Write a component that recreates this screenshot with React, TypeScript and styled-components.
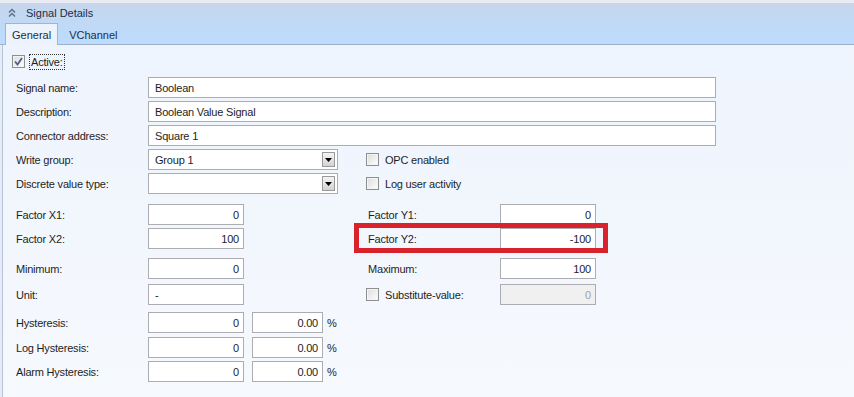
import React from 'react';
import styled, { createGlobalStyle, css } from 'styled-components';

const GlobalStyle = createGlobalStyle`
  html, body {
    margin: 0;
    padding: 0;
    background: #e8ecf2;
  }
  body {
    font-family: "Liberation Sans", Arial, sans-serif;
    font-size: 11px;
    letter-spacing: -0.2px;
    color: #1e1e1e;
  }
`;

const Panel = styled.div`
  width: 854px;
  height: 394px;
  margin-top: 3px;
  display: flex;
  flex-direction: column;
  overflow: hidden;
`;

const TopBar = styled.div`
  background: linear-gradient(to bottom, #c6d6eb 0%, #c0d9f6 50%, #bcdcfe 100%);
  border-bottom: 1px solid #9fb2ca;
  height: 41px;
  display: flex;
  flex-direction: column;
`;

const Header = styled.div`
  height: 19px;
  display: flex;
  align-items: center;
  padding-left: 8px;
  gap: 10px;
  color: #1d2d46;
  font-size: 11px;
  letter-spacing: 0;
`;

const TabStrip = styled.div`
  flex: 1;
  display: flex;
  align-items: flex-end;
  padding-left: 5px;
  gap: 2px;
`;

const Tab = styled.div<{ $active?: boolean }>`
  height: 20px;
  display: flex;
  align-items: center;
  padding: 0 6px 0 6px;
  color: #1d2d46;
  letter-spacing: 0;
  margin-bottom: -1px;
  ${p =>
    p.$active
      ? css`
          background: #ecf3fc;
          border: 1px solid #a3b5cd;
          border-bottom: none;
          height: 21px;
        `
      : css`
          padding-left: 9px;
        `}
`;

const Content = styled.div`
  flex: 1;
  margin-left: 2px;
  border-left: 1px solid #b3c4dc;
  background: linear-gradient(to bottom, #eef4fd 0%, #f3f7fd 60%, #f6f9fd 100%);
  padding: 10px 0 0 13px;
`;

const CheckRow = styled.div`
  display: flex;
  align-items: center;
  height: 13px;
  padding-left: -4px;
  margin-left: -4px;
`;

const Box = styled.span`
  width: 11px;
  height: 11px;
  border: 1px solid #8e8f8f;
  background: linear-gradient(135deg, #dcdcdc 0%, #f4f4f4 70%, #ffffff 100%);
  box-shadow: inset 0 0 0 1px #f4f4f4;
  display: inline-flex;
  align-items: center;
  justify-content: center;
  flex-shrink: 0;
`;

const FocusText = styled.span`
  margin-left: 5px;
  padding: 1px 1px;
  outline: 1px dotted #333;
`;

const Row = styled.div<{ $mt: number }>`
  display: flex;
  align-items: center;
  height: 21px;
  margin-top: ${p => p.$mt}px;
`;

const Label = styled.div`
  width: 132px;
  flex-shrink: 0;
`;

const Input = styled.div<{ $w: number; $right?: boolean; $disabled?: boolean }>`
  box-sizing: border-box;
  width: ${p => p.$w}px;
  height: 21px;
  border: 1px solid #abadb3;
  background: ${p => (p.$disabled ? '#f0f0f0' : '#ffffff')};
  color: ${p => (p.$disabled ? '#a3a3a3' : '#1e1e1e')};
  display: flex;
  align-items: center;
  justify-content: ${p => (p.$right ? 'flex-end' : 'flex-start')};
  padding: ${p => (p.$right ? '0 4px 0 0' : '0 0 0 6px')};
  flex-shrink: 0;
  position: relative;
`;

const DropButton = styled.span`
  position: absolute;
  right: 2px;
  top: 2px;
  width: 13px;
  height: 15px;
  box-sizing: border-box;
  border: 1px solid #9a9a9a;
  background: linear-gradient(to bottom, #f3f3f3 0%, #e4e4e4 50%, #d3d3d3 100%);
  display: flex;
  align-items: center;
  justify-content: center;
`;

const LeftCell = styled.div`
  width: 218px;
  flex-shrink: 0;
  display: flex;
  align-items: center;
`;

const RightCell = styled.div<{ $highlight?: boolean }>`
  display: flex;
  align-items: center;
  position: relative;
  ${p =>
    p.$highlight &&
    css`
      &::after {
        content: '';
        position: absolute;
        left: -12px;
        right: -12px;
        top: -5px;
        bottom: -4px;
        border: 5px solid #d8232c;
        pointer-events: none;
      }
    `}
`;

const RightLabel = styled.div`
  width: 134px;
  box-sizing: border-box;
  padding-left: 2px;
  flex-shrink: 0;
  display: flex;
  align-items: center;
`;

const CheckLabel = styled.div`
  width: 134px;
  flex-shrink: 0;
  display: flex;
  align-items: center;
  gap: 6px;
`;

const Pct = styled.span`
  margin-left: 4px;
`;

const Gap = styled.span`
  width: 8px;
  flex-shrink: 0;
`;

const CollapseIcon = () => (
  <svg width="8" height="10" viewBox="0 0 8 10">
    <path d="M1 4.5 L4 1.5 L7 4.5 M1 8.5 L4 5.5 L7 8.5" fill="none" stroke="#5d6e84" strokeWidth="1.4" />
  </svg>
);

const CheckMark = () => (
  <svg width="9" height="9" viewBox="0 0 9 9">
    <path d="M1 4.5 L3.5 7.5 L8 1" fill="none" stroke="#4b5e8c" strokeWidth="1.8" />
  </svg>
);

const Arrow = () => (
  <svg width="7" height="4" viewBox="0 0 7 4">
    <path d="M0 0 H7 L3.5 4 Z" fill="#000" />
  </svg>
);

const Check = ({ checked }: { checked?: boolean }) => <Box>{checked && <CheckMark />}</Box>;

const App: React.FC = () => {
  return (
    <>
      <GlobalStyle />
      <Panel>
        <TopBar>
          <Header>
            <CollapseIcon />
            <span>Signal Details</span>
          </Header>
          <TabStrip>
            <Tab $active>General</Tab>
            <Tab>VChannel</Tab>
          </TabStrip>
        </TopBar>

        <Content>
          <CheckRow>
            <Check checked />
            <FocusText>Active:</FocusText>
          </CheckRow>

          <Row $mt={9}>
            <Label>Signal name:</Label>
            <Input $w={568}>Boolean</Input>
          </Row>
          <Row $mt={3}>
            <Label>Description:</Label>
            <Input $w={568}>Boolean Value Signal</Input>
          </Row>
          <Row $mt={3}>
            <Label>Connector address:</Label>
            <Input $w={568}>Square 1</Input>
          </Row>
          <Row $mt={3}>
            <Label>Write group:</Label>
            <LeftCell>
              <Input $w={190}>
                Group 1
                <DropButton><Arrow /></DropButton>
              </Input>
            </LeftCell>
            <RightCell>
              <CheckLabel>
                <Check />
                <span>OPC enabled</span>
              </CheckLabel>
            </RightCell>
          </Row>
          <Row $mt={3}>
            <Label>Discrete value type:</Label>
            <LeftCell>
              <Input $w={190}>
                <DropButton><Arrow /></DropButton>
              </Input>
            </LeftCell>
            <RightCell>
              <CheckLabel>
                <Check />
                <span>Log user activity</span>
              </CheckLabel>
            </RightCell>
          </Row>

          <Row $mt={10}>
            <Label>Factor X1:</Label>
            <LeftCell>
              <Input $w={96} $right>0</Input>
            </LeftCell>
            <RightCell>
              <RightLabel>Factor Y1:</RightLabel>
              <Input $w={96} $right>0</Input>
            </RightCell>
          </Row>
          <Row $mt={3}>
            <Label>Factor X2:</Label>
            <LeftCell>
              <Input $w={96} $right>100</Input>
            </LeftCell>
            <RightCell $highlight>
              <RightLabel>Factor Y2:</RightLabel>
              <Input $w={96} $right>-100</Input>
            </RightCell>
          </Row>

          <Row $mt={9}>
            <Label>Minimum:</Label>
            <LeftCell>
              <Input $w={96} $right>0</Input>
            </LeftCell>
            <RightCell>
              <RightLabel>Maximum:</RightLabel>
              <Input $w={96} $right>100</Input>
            </RightCell>
          </Row>
          <Row $mt={5}>
            <Label>Unit:</Label>
            <LeftCell>
              <Input $w={96}>-</Input>
            </LeftCell>
            <RightCell>
              <CheckLabel>
                <Check />
                <span>Substitute-value:</span>
              </CheckLabel>
              <Input $w={96} $right $disabled>0</Input>
            </RightCell>
          </Row>

          <Row $mt={7}>
            <Label>Hysteresis:</Label>
            <Input $w={96} $right>0</Input>
            <Gap />
            <Input $w={71} $right>0.00</Input>
            <Pct>%</Pct>
          </Row>
          <Row $mt={4}>
            <Label>Log Hysteresis:</Label>
            <Input $w={96} $right>0</Input>
            <Gap />
            <Input $w={71} $right>0.00</Input>
            <Pct>%</Pct>
          </Row>
          <Row $mt={3}>
            <Label>Alarm Hysteresis:</Label>
            <Input $w={96} $right>0</Input>
            <Gap />
            <Input $w={71} $right>0.00</Input>
            <Pct>%</Pct>
          </Row>
        </Content>
      </Panel>
    </>
  );
};

export default App;
